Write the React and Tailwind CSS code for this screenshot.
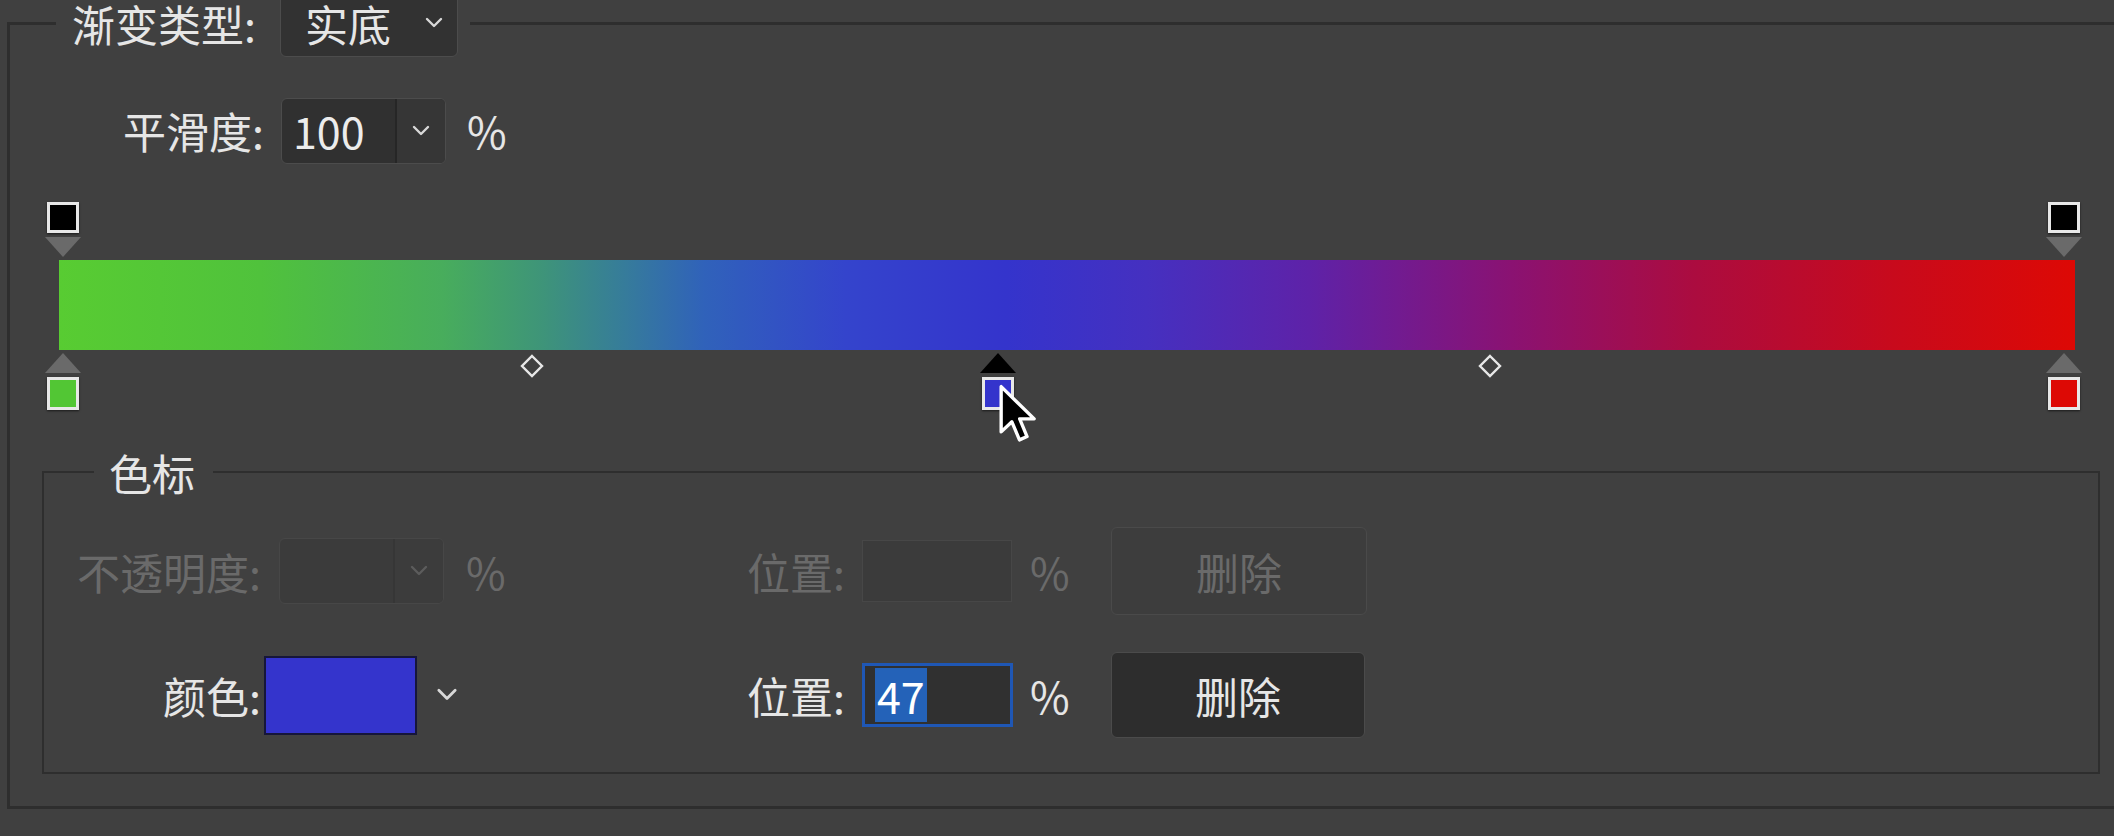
import React from 'react';

const FONT = "font-['Noto_Sans_CJK_SC','Noto_Sans',sans-serif]";

const Chevron = ({ className = '' }) => (
  <svg viewBox="0 0 20 12" className={className} fill="none" stroke="currentColor" strokeWidth="2.4" strokeLinecap="round" strokeLinejoin="round">
    <polyline points="3,2 10,9 17,2" />
  </svg>
);

const Tri = ({ up, color }) => (
  <svg width="36" height="20" viewBox="0 0 36 20">
    <polygon points={up ? '18,0 36,20 0,20' : '0,0 36,0 18,20'} fill={color} />
  </svg>
);

// opacity stop above the bar
const TopStop = ({ left }) => (
  <div className="absolute top-0 flex flex-col items-center" style={{ left }}>
    <div className="w-[32px] h-[31px] bg-black border-[3px] border-[#e8e8e8] shadow-[0_1px_2px_rgba(0,0,0,0.6)]" />
    <div className="mt-[4px]"><Tri color="#6a6a6a" /></div>
  </div>
);

// colour stop under the bar
const BottomStop = ({ left, color, active }) => (
  <div className="absolute top-[151px] flex flex-col items-center" style={{ left }}>
    <Tri up color={active ? '#000' : '#6a6a6a'} />
    <div className="mt-[4px] w-[32px] h-[33px] border-[3px] border-[#e8e8e8] shadow-[0_1px_2px_rgba(0,0,0,0.6)]" style={{ background: color }} />
  </div>
);

const Diamond = ({ left }) => (
  <svg className="absolute top-[152px]" style={{ left }} width="26" height="24" viewBox="0 0 26 24">
    <polygon points="13,2 23,12 13,22 3,12" fill="none" stroke="#e8e8e8" strokeWidth="2.4" />
  </svg>
);

const Combo = ({ value, disabled }) => (
  <div className={`flex h-[66px] w-[165px] rounded-[6px] border overflow-hidden ${disabled ? 'border-[#474747] bg-[#3b3b3b]' : 'border-[#4c4c4c] bg-[#303030]'}`}>
    <div className={`w-[113px] flex items-center pl-[11px] ${disabled ? 'text-[#6a6a6a]' : 'text-[#ececec]'}`}>{value}</div>
    <div className={`w-[2px] ${disabled ? 'bg-[#363636]' : 'bg-[#262626]'}`} />
    <div className={`flex-1 flex items-center justify-center ${disabled ? 'bg-[#3c3c3c] text-[#5c5c5c]' : 'bg-[#363636] text-[#d8d8d8]'}`}>
      <Chevron className="w-[20px] h-[12px]" />
    </div>
  </div>
);

const Cursor = () => (
  <svg className="absolute left-[988px] top-[181px]" width="40" height="62" viewBox="0 0 19 29">
    <path d="M1.5 1.5 L1.5 23 L6.6 18.2 L10.2 26.8 L13.8 25.2 L10.3 16.8 L17.2 16.8 Z" fill="#000" stroke="#fff" strokeWidth="1.6" strokeLinejoin="round" />
  </svg>
);

export default function App() {
  return (
    <div className={`w-[2114px] h-[836px] overflow-hidden bg-[#404040] text-[43px] leading-none text-[#e6e6e6] ${FONT}`}>
      <fieldset className="ml-[7px] mt-[-11px] w-[2130px] border-[3px] border-[#2e2e2e]">
        <legend className="ml-[46px] pl-[16px] pr-[12px]">
          <div className="flex items-center">
            <span className="w-[185px] shrink-0 whitespace-nowrap">渐变类型:</span>
            <div className="ml-[23px] flex items-center h-[68px] w-[178px] rounded-[6px] border border-[#4c4c4c] bg-[#323232] pl-[24px] pr-[13px]">
              <span className="flex-1">实底</span>
              <Chevron className="w-[20px] h-[12px] text-[#d8d8d8]" />
            </div>
          </div>
        </legend>

        <div className="mt-[41px] flex items-center h-[65px]">
          <div className="w-[254px] text-right whitespace-nowrap">平滑度:</div>
          <div className="ml-[17px]"><Combo value="100" /></div>
          <span className="ml-[21px]">%</span>
        </div>

        {/* gradient editor */}
        <div className="relative mt-[39px] pt-[58px] h-[208px]">
          <div className="ml-[49px] w-[2016px] h-[90px] bg-[linear-gradient(to_right,#58cc32_0%,#50c23c_10%,#48ad5c_19%,#3e9479_24%,#367c9a_28%,#3062ba_32%,#3444cc_39%,#3434cc_47%,#4530c0_54%,#5e22a8_62%,#8a1272_72%,#ab0c40_81%,#c80a1c_91%,#dd0905_100%)]" />
          <TopStop left={35} />
          <TopStop left={2036} />
          <BottomStop left={35} color="#52c634" />
          <BottomStop left={970} color="#3434cc" active />
          <BottomStop left={2036} color="#dd0905" />
          <Diamond left={509} />
          <Diamond left={1467} />
          <Cursor />
        </div>

        {/* colour stop section */}
        <fieldset className="mt-[36px] ml-[32px] mb-[32px] w-[2058px] border-2 border-[#2e2e2e]">
          <legend className="ml-[50px] pl-[15px] pr-[18px] leading-[52px]">色标</legend>

          <div className="mt-[29px] flex items-center h-[88px] text-[#6a6a6a]">
            <div className="w-[217px] text-right whitespace-nowrap">不透明度:</div>
            <div className="ml-[18px]"><Combo value="" disabled /></div>
            <span className="ml-[22px] w-[40px]">%</span>
            <span className="ml-[241px] w-[100px] whitespace-nowrap">位置:</span>
            <div className="ml-[15px] w-[150px] h-[62px] border border-[#474747] bg-[#3b3b3b]" />
            <span className="ml-[18px] w-[40px]">%</span>
            <div className="ml-[41px] w-[256px] h-[88px] rounded-[6px] border border-[#4a4a4a] bg-[#3d3d3d] flex items-center justify-center">删除</div>
          </div>

          <div className="mt-[36px] mb-[33px] flex items-center h-[88px]">
            <div className="w-[217px] text-right whitespace-nowrap">颜色:</div>
            <div className="ml-[3px] w-[153px] h-[79px] bg-[#3434cc] border-2 border-[#16163a]" />
            <Chevron className="ml-[18px] w-[24px] h-[14px] text-[#d8d8d8]" />
            <span className="ml-[288px] w-[100px] whitespace-nowrap">位置:</span>
            <div className="ml-[15px] w-[151px] h-[64px] border-[3px] border-[#1f57b5] bg-[#303030] flex items-center pl-[10px]">
              <span className="bg-[#2462b8] text-white h-[54px] flex items-center px-[2px]">47</span>
            </div>
            <span className="ml-[17px] w-[40px]">%</span>
            <div className="ml-[41px] w-[254px] h-[86px] rounded-[6px] border border-[#4b4b4b] bg-[#2d2d2d] flex items-center justify-center">删除</div>
          </div>
        </fieldset>
      </fieldset>
    </div>
  );
}
